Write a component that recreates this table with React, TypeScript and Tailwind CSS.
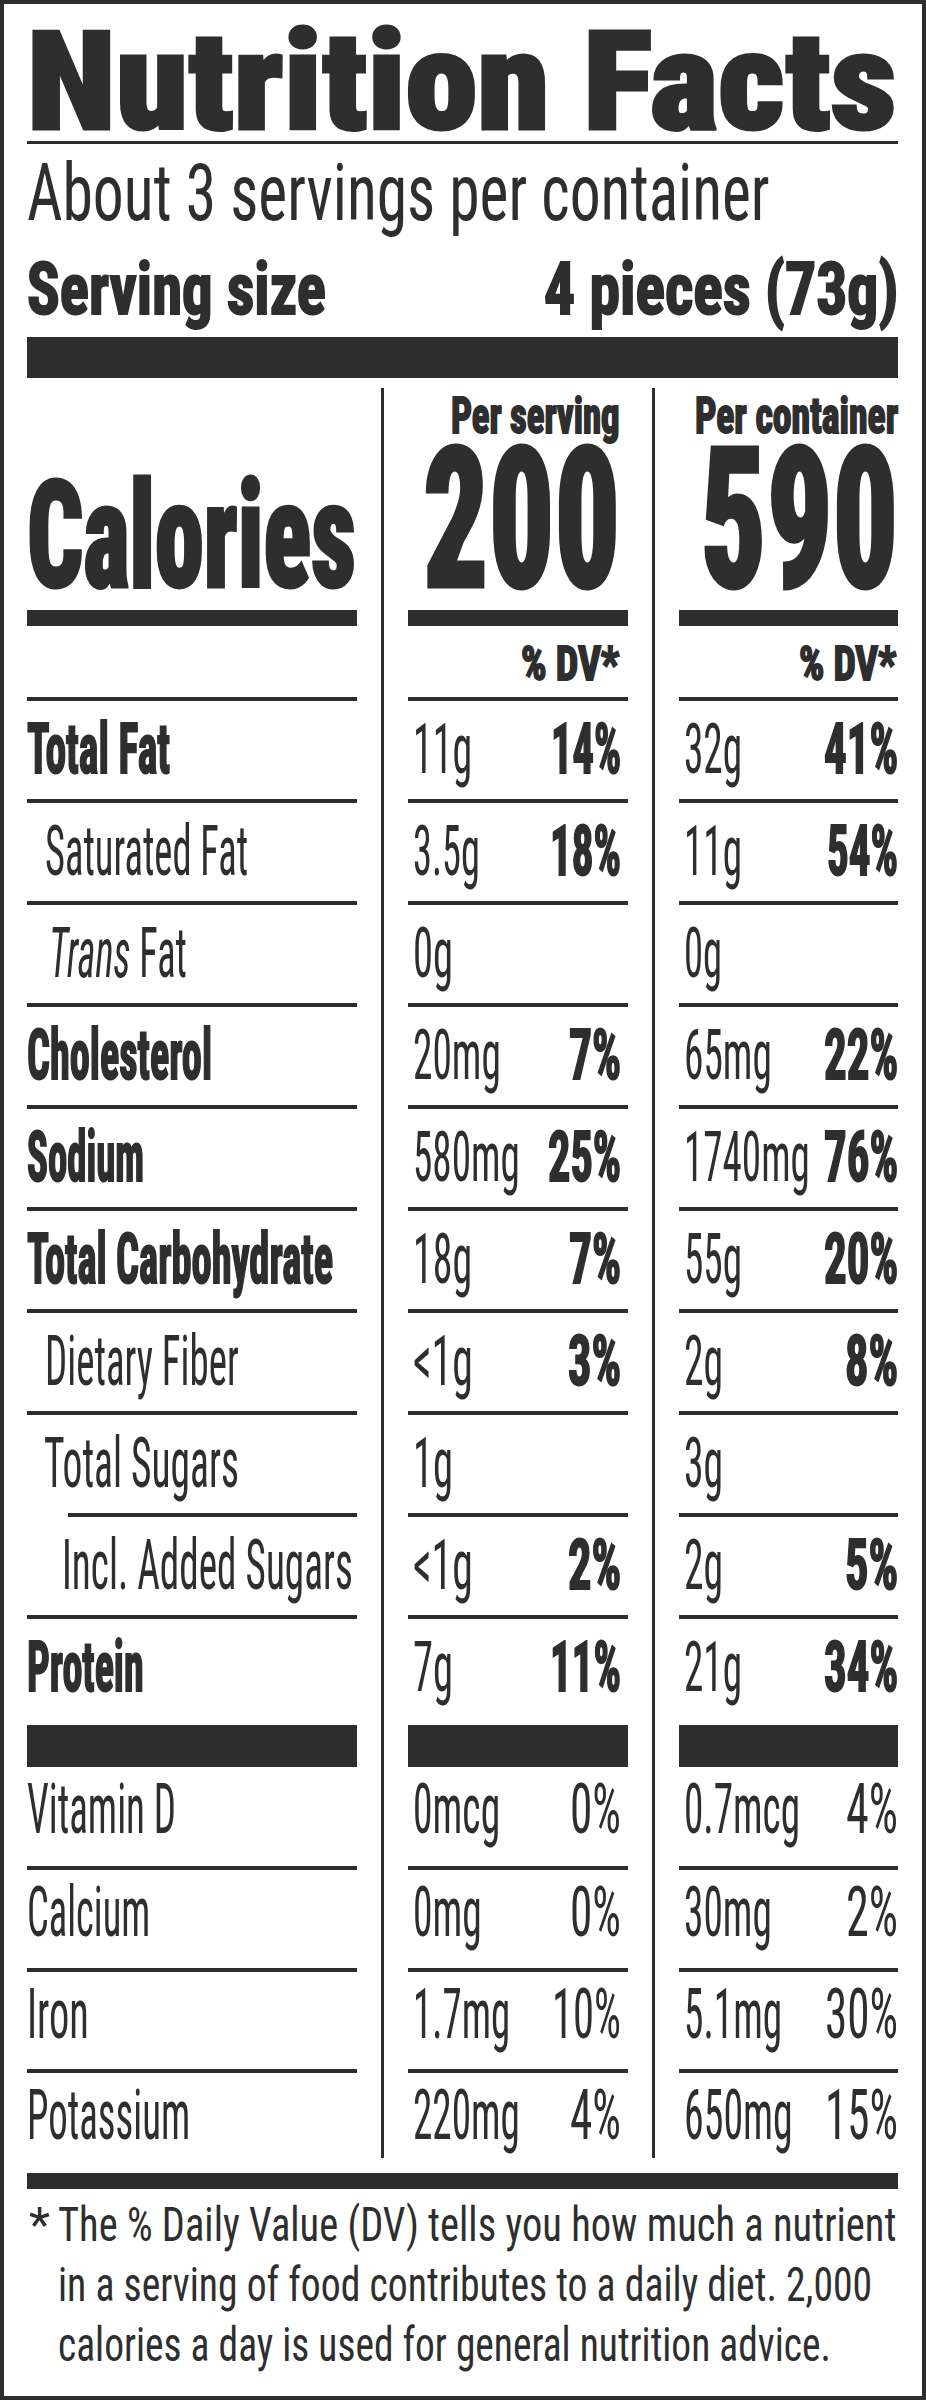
import { useLayoutEffect, useRef, useState, type ReactNode } from "react";
import clsx from "clsx";

// Squeeze a line of text horizontally so it fills the width printed on the label.
function Fit({ w, className, children }: { w: number; className?: string; children: ReactNode }) {
  const ref = useRef<HTMLSpanElement>(null);
  const [k, setK] = useState(1);
  useLayoutEffect(() => {
    const el = ref.current;
    if (!el) return;
    const fit = () => setK(w / el.offsetWidth);
    fit();
    document.fonts?.ready.then(fit);
  }, [w]);
  return (
    <span className={clsx("inline-block", className)} style={{ width: w }}>
      <span ref={ref} className="inline-block origin-left whitespace-nowrap" style={{ transform: `scaleX(${k})` }}>
        {children}
      </span>
    </span>
  );
}

function Cols({ left, mid, right, className }: { left?: ReactNode; mid?: ReactNode; right?: ReactNode; className?: string }) {
  return (
    <div className={clsx("flex gap-[24px]", className)}>
      <div className="w-[330px]">{left}</div>
      <div className="w-[247px] border-l-[3px] border-[#2e2e2e] pl-[24px]">{mid}</div>
      <div className="w-[246px] border-l-[3px] border-[#2e2e2e] pl-[24px]">{right}</div>
    </div>
  );
}

type Row = {
  label: ReactNode;
  lw: number;
  bold?: boolean;
  indent?: string;
  a1: string;
  a1w: number;
  p1?: string;
  p1w?: number;
  a2: string;
  a2w: number;
  p2?: string;
  p2w?: number;
  h: string;
  rule?: string;
};

const nutrients: Row[] = [
  { label: "Total Fat", lw: 143, bold: true, a1: "11g", a1w: 59, p1: "14%", p1w: 70, a2: "32g", a2w: 58, p2: "41%", p2w: 74, h: "h-[98px]" },
  { label: "Saturated Fat", lw: 203, indent: "pl-[18px]", a1: "3.5g", a1w: 67, p1: "18%", p1w: 71, a2: "11g", a2w: 58, p2: "54%", p2w: 71, h: "h-[98px]" },
  { label: <><i>Trans</i> Fat</>, lw: 138, indent: "pl-[22px]", a1: "0g", a1w: 40, a2: "0g", a2w: 38, h: "h-[98px]" },
  { label: "Cholesterol", lw: 185, bold: true, a1: "20mg", a1w: 88, p1: "7%", p1w: 52, a2: "65mg", a2w: 88, p2: "22%", p2w: 74, h: "h-[98px]" },
  { label: "Sodium", lw: 117, bold: true, a1: "580mg", a1w: 107, p1: "25%", p1w: 73, a2: "1740mg", a2w: 126, p2: "76%", p2w: 74, h: "h-[98px]" },
  { label: "Total Carbohydrate", lw: 306, bold: true, a1: "18g", a1w: 59, p1: "7%", p1w: 52, a2: "55g", a2w: 58, p2: "20%", p2w: 74, h: "h-[98px]" },
  { label: "Dietary Fiber", lw: 194, indent: "pl-[18px]", a1: "<1g", a1w: 60, p1: "3%", p1w: 53, a2: "2g", a2w: 39, p2: "8%", p2w: 53, h: "h-[98px]" },
  { label: "Total Sugars", lw: 195, indent: "pl-[17px]", a1: "1g", a1w: 40, a2: "3g", a2w: 39, h: "h-[98px]", rule: "ml-[41px]" },
  { label: "Incl. Added Sugars", lw: 291, indent: "pl-[35px]", a1: "<1g", a1w: 60, p1: "2%", p1w: 53, a2: "2g", a2w: 39, p2: "5%", p2w: 53, h: "h-[98px]" },
  { label: "Protein", lw: 117, bold: true, a1: "7g", a1w: 40, p1: "11%", p1w: 71, a2: "21g", a2w: 58, p2: "34%", p2w: 74, h: "h-[106px]" },
];

const vitamins: Row[] = [
  { label: "Vitamin D", lw: 149, a1: "0mcg", a1w: 87, p1: "0%", p1w: 51, a2: "0.7mcg", a2w: 116, p2: "4%", p2w: 52, h: "h-[99px]" },
  { label: "Calcium", lw: 123, a1: "0mg", a1w: 69, p1: "0%", p1w: 51, a2: "30mg", a2w: 88, p2: "2%", p2w: 52, h: "h-[98px]" },
  { label: "Iron", lw: 62, a1: "1.7mg", a1w: 97, p1: "10%", p1w: 69, a2: "5.1mg", a2w: 98, p2: "30%", p2w: 73, h: "h-[97px]" },
  { label: "Potassium", lw: 163, a1: "220mg", a1w: 107, p1: "4%", p1w: 51, a2: "650mg", a2w: 109, p2: "15%", p2w: 73, h: "h-[85px]" },
];

const bar = "bg-[#2e2e2e]";
const heavy = "font-bold [-webkit-text-stroke:2px_#2e2e2e]";
const heavier = "font-black [-webkit-text-stroke:3px_#2e2e2e]";

function Line({ r, vit }: { r: Row; vit?: boolean }) {
  const text = clsx("text-[71px] leading-[71px]", vit ? "pt-[6px]" : "pt-[12px]");
  const pct = vit ? "" : heavy;
  return (
    <Cols
      className={r.h}
      left={
        <div className={clsx(text, r.indent, r.bold && heavy)}>
          <Fit w={r.lw}>{r.label}</Fit>
        </div>
      }
      mid={
        <div className={clsx(text, "flex justify-between pl-[5px] pr-[7px]")}>
          <Fit w={r.a1w}>{r.a1}</Fit>
          {r.p1 && <Fit w={r.p1w!} className={pct}>{r.p1}</Fit>}
        </div>
      }
      right={
        <div className={clsx(text, "flex justify-between pl-[5px]")}>
          <Fit w={r.a2w}>{r.a2}</Fit>
          {r.p2 && <Fit w={r.p2w!} className={pct}>{r.p2}</Fit>}
        </div>
      }
    />
  );
}

function Rule({ indent }: { indent?: string }) {
  return (
    <Cols
      left={<div className={clsx("h-[4px]", bar, indent)} />}
      mid={<div className={clsx("h-[4px]", bar)} />}
      right={<div className={clsx("h-[4px]", bar)} />}
    />
  );
}

export default function App() {
  return (
    <div className="h-[2400px] w-[926px] overflow-x-clip border-4 border-[#2e2e2e] bg-white pr-[24px] pl-[23px] font-['Roboto_Condensed',sans-serif] text-[#2e2e2e]">
      <h1 className={clsx("pt-[20px] text-[138px] leading-[117px]", heavier)}>
        <Fit w={869}>Nutrition Facts</Fit>
      </h1>
      <div className={clsx("h-[3px]", bar)} />
      <p className="pt-[9px] text-[80px] leading-[80px]">
        <Fit w={743}>About 3 servings per container</Fit>
      </p>
      <div className={clsx("mt-[20px] flex justify-between text-[73px] leading-[73px]", heavy)}>
        <Fit w={299}>Serving size</Fit>
        <Fit w={354}>4 pieces (73g)</Fit>
      </div>
      <div className={clsx("mt-[11px] h-[41px]", bar)} />

      <div className="mt-[10px]">
        <Cols
          className="h-[222px]"
          left={
            <div className={clsx("pt-[79px] text-[148px] leading-[140px]", heavier)}>
              <Fit w={329}>Calories</Fit>
            </div>
          }
          mid={
            <div className="pr-[8px] text-right">
              <div className={clsx("pt-[3px] text-[50px] leading-[50px]", heavy)}>
                <Fit w={169}>Per serving</Fit>
              </div>
              <div className={clsx("mt-[4px] text-[197px] leading-[150px]", heavier)}>
                <Fit w={197}>200</Fit>
              </div>
            </div>
          }
          right={
            <div className="text-right">
              <div className={clsx("pt-[3px] text-[50px] leading-[50px]", heavy)}>
                <Fit w={203}>Per container</Fit>
              </div>
              <div className={clsx("mt-[4px] text-[197px] leading-[150px]", heavier)}>
                <Fit w={197}>590</Fit>
              </div>
            </div>
          }
        />
        <Cols
          left={<div className={clsx("h-[16px]", bar)} />}
          mid={<div className={clsx("h-[16px]", bar)} />}
          right={<div className={clsx("h-[16px]", bar)} />}
        />
        <Cols
          className="h-[71px]"
          mid={
            <div className={clsx("pt-[13px] pr-[9px] text-right text-[49px] leading-[49px]", heavy)}>
              <Fit w={98}>% DV*</Fit>
            </div>
          }
          right={
            <div className={clsx("pt-[13px] pr-[2px] text-right text-[49px] leading-[49px]", heavy)}>
              <Fit w={97}>% DV*</Fit>
            </div>
          }
        />
        <Rule />
        {nutrients.map((r, i) => (
          <div key={i}>
            <Line r={r} />
            {i < nutrients.length - 1 && <Rule indent={nutrients[i].rule} />}
          </div>
        ))}
        <Cols
          left={<div className={clsx("h-[42px]", bar)} />}
          mid={<div className={clsx("h-[42px]", bar)} />}
          right={<div className={clsx("h-[42px]", bar)} />}
        />
        {vitamins.map((r, i) => (
          <div key={i}>
            <Line r={r} vit />
            {i < vitamins.length - 1 && <Rule />}
          </div>
        ))}
      </div>

      <div className={clsx("mt-[15px] h-[16px]", bar)} />
      <div className="mt-[6px] flex text-[49px] leading-[60px]">
        <span className="w-[31px] pl-[2px]">*</span>
        <div>
          <div><Fit w={838}>The % Daily Value (DV) tells you how much a nutrient</Fit></div>
          <div><Fit w={814}>in a serving of food contributes to a daily diet. 2,000</Fit></div>
          <div><Fit w={773}>calories a day is used for general nutrition advice.</Fit></div>
        </div>
      </div>
    </div>
  );
}
